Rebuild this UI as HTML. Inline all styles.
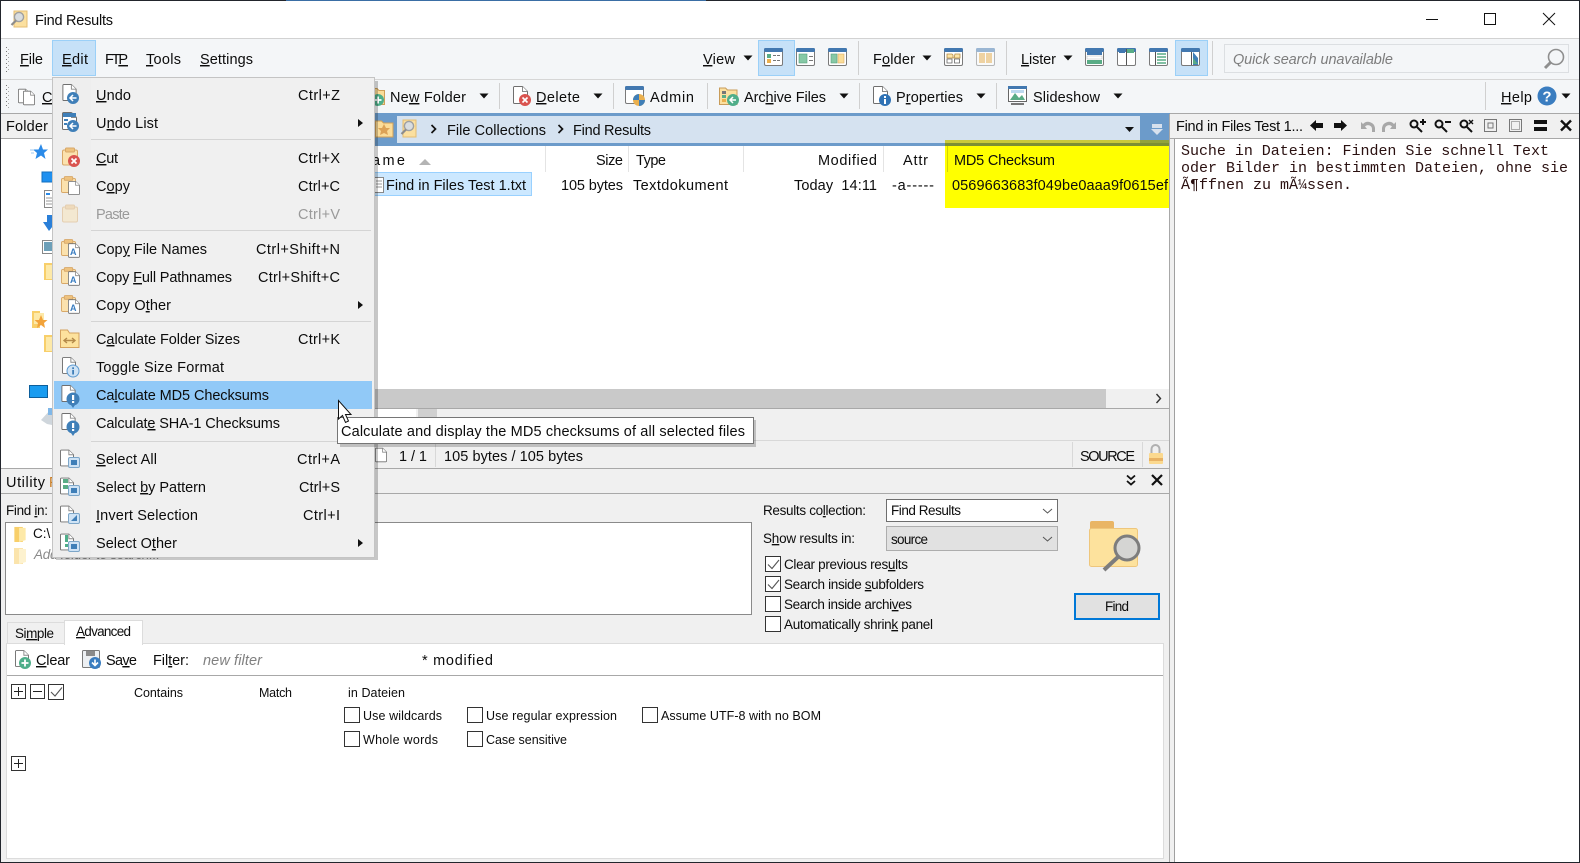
<!DOCTYPE html>
<html><head><meta charset="utf-8"><title>Find Results</title>
<style>
html,body{margin:0;padding:0;background:#fff;overflow:hidden}
svg{display:block;font-family:"Liberation Sans",sans-serif;font-size:14.5px;fill:#0c0c0c}
.g{fill:#9a9a9a}
</style></head><body>
<svg width="1580" height="863" viewBox="0 0 1580 863" xmlns="http://www.w3.org/2000/svg">
<defs>
<symbol id="pg" viewBox="0 0 15 18" overflow="visible"><path d="M.5 1.5a1 1 0 0 1 1-1H9.5L14.5 5.5V16.5a1 1 0 0 1-1 1H1.5a1 1 0 0 1-1-1Z" fill="#fff" stroke="#6f6f6f"/><path d="M9.5.5V5.5H14.5" fill="#fff" stroke="#8a8a8a"/></symbol>
<symbol id="clip" viewBox="0 0 16 18" overflow="visible"><rect x=".5" y="2.5" width="15" height="15" rx="1.5" fill="#fbe2ae" stroke="#d8a868"/><rect x="3.5" y=".5" width="9" height="4" rx="1" fill="#eec27e" stroke="#d8a868"/></symbol>
<symbol id="win" viewBox="0 0 19 18" overflow="visible"><rect x=".5" y=".5" width="18" height="17" rx="1.5" fill="#fff" stroke="#7a7a7a"/><rect x="0" y="0" width="19" height="4" rx="1.5" fill="#4278b0"/></symbol>
<symbol id="fold" viewBox="0 0 12 17" overflow="visible"><path d="M0 1H9V17H0Z" fill="#f8cf6a"/><path d="M5 2H12V15L5 17Z" fill="#fde9a8"/></symbol>
</defs>

<!-- window base -->
<rect width="1580" height="863" fill="#f0f0f0"/>
<rect width="1580" height="38" fill="#fff"/>
<rect y="39" width="1580" height="74" fill="#f4f6f8"/>
<rect y="38" width="1580" height="1" fill="#d2d2d2"/>
<rect y="79" width="1580" height="1" fill="#d6d6d6"/>
<rect y="113" width="1580" height="1" fill="#a8a8a8"/>

<!-- title bar -->
<g>
<path d="M14 11H27V27H14Z" fill="#fbe0a0" stroke="#e5bd72"/>
<circle cx="19" cy="17" r="4.6" fill="#d9dde0" stroke="#a0a0a0" stroke-width="1.4"/>
<path d="M16 20.500L11.500 25" stroke="#8c8c8c" stroke-width="2.200"/>
</g>
<text x="35" y="25" textLength="78">Find Results</text>
<path d="M1426 19.500H1438" stroke="#111"/>
<rect x="1484.500" y="13.500" width="11" height="11" fill="none" stroke="#111"/>
<path d="M1543 13L1555 25M1555 13L1543 25" stroke="#111"/>

<!-- grips -->
<path d="M6.500 47V72M6.500 85V108" stroke="#777" stroke-dasharray="1 3"/>
<path d="M8.500 49V72M8.500 87V108" stroke="#aaa" stroke-dasharray="1 3"/>

<!-- menu bar -->
<rect x="52.500" y="40.500" width="43" height="35" fill="#c6e1f8" stroke="#9bd0f8"/>
<text x="20" y="64" textLength="23"><tspan text-decoration="underline">F</tspan>ile</text>
<text x="62" y="64" textLength="26"><tspan text-decoration="underline">E</tspan>dit</text>
<text x="105" y="64" textLength="23">FT<tspan text-decoration="underline">P</tspan></text>
<text x="146" y="64" textLength="35"><tspan text-decoration="underline">T</tspan>ools</text>
<text x="200" y="64" textLength="53"><tspan text-decoration="underline">S</tspan>ettings</text>

<text x="703" y="64" textLength="32"><tspan text-decoration="underline">V</tspan>iew</text>
<path d="M743.500 55.500H752.500L748 60.500Z" fill="#111"/>
<rect x="758.500" y="40.500" width="36" height="35" fill="#c6e1f8" stroke="#9bd0f8"/>
<use href="#win" x="764" y="48" width="19" height="18"/>
<rect x="767" y="54" width="4" height="4" fill="#59ac86"/><rect x="767" y="59" width="4" height="4" fill="#eab04f"/><path d="M773 55.500h8M773 60.500h8" stroke="#777" stroke-dasharray="3 1"/>
<use href="#win" x="796" y="48" width="19" height="18"/>
<rect x="799" y="54" width="8" height="9" fill="#86c9a6" stroke="#59a07c" stroke-width=".6"/><path d="M809 56.500h4M809 60.500h4" stroke="#777"/>
<use href="#win" x="828" y="48" width="19" height="18"/>
<rect x="831" y="54" width="6" height="9" fill="#86c9a6" stroke="#59a07c" stroke-width=".6"/><rect x="838" y="54" width="6" height="9" fill="#fbdd98" stroke="#dfb066" stroke-width=".6"/>
<rect x="858" y="41" width="1" height="34" fill="#d0d0d0"/>

<text x="873" y="64" textLength="42">F<tspan text-decoration="underline">o</tspan>lder</text>
<path d="M922.500 55.500H931.500L927 60.500Z" fill="#111"/>
<use href="#win" x="944" y="48" width="19" height="18"/>
<path d="M947 54h5l1 1v3h-6ZM955 54h5v4h-6Z" fill="#fde5a8" stroke="#b58c46" stroke-width=".8"/>
<path d="M947 59h5v4h-5ZM954.500 59h5v4h-5Z" fill="#fff" stroke="#666" stroke-width=".8"/>
<g opacity=".5"><use href="#win" x="976" y="48" width="19" height="18"/><rect x="979" y="53" width="6" height="10" fill="#eab04f"/><rect x="986" y="53" width="6" height="10" fill="#eab04f"/></g>
<rect x="1006" y="41" width="1" height="34" fill="#d0d0d0"/>

<text x="1021" y="64" textLength="35"><tspan text-decoration="underline">L</tspan>ister</text>
<path d="M1063.500 55.500H1072.500L1068 60.500Z" fill="#111"/>
<use href="#win" x="1085" y="48" width="19" height="18"/>
<rect x="1087" y="52" width="15" height="3" fill="#4278b0"/><rect x="1087" y="56" width="15" height="3" fill="#fff" stroke="#aaa" stroke-width=".4"/><rect x="1087" y="60" width="15" height="4" fill="#59ac86"/>
<use href="#win" x="1117" y="48" width="19" height="18"/>
<rect x="1119" y="49" width="6" height="4" fill="#4278b0"/><rect x="1127" y="49" width="7" height="4" fill="#59ac86"/><path d="M1126.500 49V65" stroke="#555"/>
<use href="#win" x="1149" y="48" width="19" height="18"/>
<path d="M1155.500 52V65" stroke="#555"/><path d="M1157 54h9M1157 57h9M1157 60h9M1157 63h9" stroke="#59ac86" stroke-width="1.600"/>
<rect x="1175.500" y="40.500" width="32" height="35" fill="#c6e1f8" stroke="#9bd0f8"/>
<use href="#win" x="1181" y="48" width="19" height="18"/>
<path d="M1191.500 52V65" stroke="#555"/><path d="M1193 52L1198 58V65H1193Z" fill="#3f7fb8"/><path d="M1193 58L1198 64H1193Z" fill="#59ac86"/>
<rect x="1212" y="41" width="1" height="34" fill="#d0d0d0"/>
<rect x="1224.500" y="44.500" width="344" height="28" fill="#f4f6f8" stroke="#dcdfe2"/>
<text x="1233" y="64" textLength="160" font-style="italic" fill="#7d7d7d">Quick search unavailable</text>
<circle cx="1556" cy="57" r="7.500" fill="none" stroke="#8f8f8f" stroke-width="1.600"/>
<path d="M1550.500 62.500L1545 68" stroke="#8f8f8f" stroke-width="3"/>

<!-- toolbar 2 -->
<use href="#pg" x="18" y="88" width="12" height="16"/><use href="#pg" x="23" y="90" width="12" height="16"/>
<text x="42" y="102"><tspan text-decoration="underline">C</tspan></text>
<path d="M371 88.500h6l2 2h5.500v14h-13.500Z" fill="#fbdc98" stroke="#cf9f58"/>
<circle cx="378" cy="100" r="6" fill="#4fae8a"/><path d="M378 96.500v7m-3.500-3.500h7" stroke="#fff" stroke-width="1.800"/>
<text x="390" y="102" textLength="76">Ne<tspan text-decoration="underline">w</tspan> Folder</text>
<path d="M479.500 93.500H488.500L484 98.500Z" fill="#111"/>
<rect x="499" y="83" width="1" height="26" fill="#d0d0d0"/>
<use href="#pg" x="513" y="86" width="15" height="18"/>
<circle cx="525" cy="100" r="6" fill="#d9534f"/><path d="M522.500 97.500l5 5m0-5l-5 5" stroke="#fff" stroke-width="1.600"/>
<text x="536" y="102" textLength="44"><tspan text-decoration="underline">D</tspan>elete</text>
<path d="M593.500 93.500H602.500L598 98.500Z" fill="#111"/>
<rect x="613" y="83" width="1" height="26" fill="#d0d0d0"/>
<use href="#win" x="625" y="86" width="19" height="18"/>
<circle cx="639" cy="100" r="6" fill="#eab04f"/><path d="M639 94a6 6 0 0 0-6 6h6Zm0 6v6a6 6 0 0 0 6-6Z" fill="#3f7fb8"/>
<text x="650" y="102" textLength="44">Admin</text>
<rect x="707" y="83" width="1" height="26" fill="#d0d0d0"/>
<path d="M719.500 88h6l2 2h9.500v14.500h-17.500Z" fill="#fbe0a0" stroke="#c89c5a"/>
<rect x="722" y="91" width="4" height="3" fill="#777"/><rect x="722" y="95" width="4" height="3" fill="#59ac86"/><rect x="722" y="99" width="4" height="3" fill="#eab04f"/>
<circle cx="733" cy="100" r="6" fill="#4fae8a"/><path d="M736 100h-5m2-3l-3 3 3 3" stroke="#fff" stroke-width="1.500" fill="none"/>
<text x="744" y="102" textLength="82">Arc<tspan text-decoration="underline">h</tspan>ive Files</text>
<path d="M839.500 93.500H848.500L844 98.500Z" fill="#111"/>
<rect x="859" y="83" width="1" height="26" fill="#d0d0d0"/>
<use href="#pg" x="873" y="86" width="15" height="18"/>
<circle cx="885" cy="100" r="6" fill="#2f72b5"/><rect x="884" y="99" width="2" height="5" fill="#fff"/><rect x="884" y="96" width="2" height="2" fill="#fff"/>
<text x="896" y="102" textLength="67">P<tspan text-decoration="underline">r</tspan>operties</text>
<path d="M976.500 93.500H985.500L981 98.500Z" fill="#111"/>
<rect x="996" y="83" width="1" height="26" fill="#d0d0d0"/>
<rect x="1008.500" y="86.500" width="18" height="15" fill="#fff" stroke="#666"/><rect x="1008" y="86" width="19" height="3" fill="#4278b0"/>
<path d="M1010 100L1015 93L1019 98L1022 95L1025 100Z" fill="#59ac86"/><rect x="1011" y="90" width="13" height="3" fill="#bcd9ef"/>
<path d="M1011 104h13" stroke="#777" stroke-width="2"/>
<text x="1033" y="102" textLength="67">Slideshow</text>
<path d="M1113.500 93.500H1122.500L1118 98.500Z" fill="#111"/>
<rect x="1485" y="82" width="1" height="28" fill="#d0d0d0"/>
<text x="1501" y="102" textLength="31"><tspan text-decoration="underline">H</tspan>elp</text>
<circle cx="1547" cy="96" r="9.500" fill="#3a7dc0"/>
<text x="1547" y="101.500" text-anchor="middle" font-weight="bold" font-size="15" fill="#fff">?</text>
<path d="M1561.500 93.500H1570.500L1566 98.500Z" fill="#111"/>

<!-- folder pane header + tree -->
<rect x="1" y="114" width="369" height="24" fill="#f0f0f0"/>
<text x="6" y="131" textLength="42">Folder</text>
<rect x="1" y="138" width="369" height="1" fill="#a8a8a8"/>
<rect x="1" y="139" width="369" height="329" fill="#fff"/>
<path d="M41 144L43 149.500H48L44 153L45.500 159L41 155.500L35.500 159L37 153L33 149.500H38.500Z" fill="#2a8ae8"/>
<path d="M30 150h4M31 153h3" stroke="#9cc9f1"/>
<rect x="42" y="172" width="12" height="10" fill="#1e90f0" stroke="#136fbf"/>
<rect x="44.500" y="190.500" width="10" height="17" fill="#fff" stroke="#888"/><path d="M46 194h4" stroke="#2a8ae8" stroke-width="2"/><path d="M46 198h6M46 201h6M46 204h6" stroke="#999"/>
<path d="M47 215H52V222H56L49 231L43 222H47Z" fill="#2a7fd8"/>
<rect x="42.500" y="240.500" width="11" height="13" fill="#fff" stroke="#888"/><rect x="44" y="242" width="8" height="9" fill="#6c9fb8"/>
<path d="M44 263H52V280H44Z" fill="#f8cf6a"/><path d="M46 265H54V279H46Z" fill="#fde9a8"/>
<path d="M32 311H40V328H32Z" fill="#f8cf6a"/><path d="M34 313H44V324H34Z" fill="#fde9a8"/><path d="M41 315L43 320H47.500L44 323L45 328L41 325L37 328L38 323L34.500 320H39Z" fill="#f2a33a"/>
<path d="M44 335H52V352H44Z" fill="#f8cf6a"/><path d="M46 337H54V351H46Z" fill="#fde9a8"/>
<rect x="29.500" y="385.500" width="18" height="12" fill="#1a9cf0" stroke="#0d5f9c"/>
<path d="M41 420L52 408V425L47 424Z" fill="#cfd6dc"/><rect x="48" y="408" width="5" height="7" fill="#7fb7e8"/>

<!-- location bar -->
<rect x="370" y="113" width="800" height="33" fill="#6c9bca"/>
<rect x="397" y="116" width="743" height="27" fill="#d5e2f0"/>
<path d="M375.500 121h6l2 2h9.500v14h-17.500Z" fill="#fbdc98" stroke="#cf9f58"/>
<path d="M384 124L386 128H390L387 131L388 135L384 133L380 135L381 131L378 128H382Z" fill="#dca256"/>
<path d="M403 120H416V137H403Z" fill="#fbe0a0" stroke="#e5bd72"/>
<circle cx="409" cy="126" r="4.600" fill="#d9dde0" stroke="#a0a0a0" stroke-width="1.400"/>
<path d="M406 129.500L401.500 134" stroke="#8c8c8c" stroke-width="2.200"/>
<path d="M431.500 125L435.500 129L431.500 133" fill="none" stroke="#111" stroke-width="1.700"/>
<text x="447" y="135" textLength="99">File Collections</text>
<path d="M558.500 125L562.500 129L558.500 133" fill="none" stroke="#111" stroke-width="1.700"/>
<text x="573" y="135" textLength="78">Find Results</text>
<path d="M1125 127H1134L1129.500 132Z" fill="#111"/>
<rect x="1152" y="124" width="10" height="4" fill="#d7e1ed"/><path d="M1151 129H1163L1157 135Z" fill="#d7e1ed"/>

<!-- file list -->
<rect x="370" y="146" width="800" height="243" fill="#fff"/>
<path d="M545.500 146V172M628.500 146V172M743.500 146V172M883.500 146V172" stroke="#e4e4e4"/>
<text x="372" y="165" textLength="33">ame</text>
<path d="M419 165L425 159L431 165Z" fill="#b4b4b4"/>
<text x="596" y="165" textLength="27">Size</text>
<text x="636" y="165" textLength="30">Type</text>
<text x="818" y="165" textLength="59">Modified</text>
<text x="903" y="165" textLength="25">Attr</text>
<rect x="372.500" y="172.500" width="159" height="23" fill="#cce8ff" stroke="#99d1ff"/>
<rect x="374.500" y="177.500" width="9" height="15" fill="#fff" stroke="#888"/><path d="M376 181h6M376 184h6M376 187h6" stroke="#999"/>
<text x="386" y="190" textLength="140">Find in Files Test 1.txt</text>
<text x="561" y="190" textLength="62">105 bytes</text>
<text x="633" y="190" textLength="95">Textdokument</text>
<text x="794" y="190" textLength="83">Today&#160; 14:11</text>
<text x="892" y="190" textLength="42">-a-----</text>
<!-- yellow highlight -->
<rect x="945" y="146" width="224" height="62" fill="#ffff00"/>
<rect x="945" y="140" width="195" height="3" fill="#c9c93a"/>
<rect x="1140" y="140" width="29" height="3" fill="#92a23c"/>
<rect x="945" y="143" width="224" height="3" fill="#7c8f34"/>
<path d="M947.500 146V172" stroke="#d4d400"/>
<text x="954" y="165" textLength="101">MD5 Checksum</text>
<text x="952" y="190" textLength="216">0569663683f049be0aaa9f0615ef</text>

<!-- scrollbar & below -->
<rect x="370" y="389" width="736" height="19" fill="#c9c9c9"/>
<rect x="1106" y="389" width="63" height="19" fill="#f0f0f0"/>
<path d="M1156.500 394L1160.500 398.500L1156.500 403" fill="none" stroke="#333" stroke-width="1.400"/>
<rect x="370" y="408" width="800" height="1" fill="#a8a8a8"/>
<rect x="370" y="409" width="46" height="9" fill="#fff"/>
<rect x="418" y="409" width="19" height="9" fill="#d0d0d0"/>
<rect x="370" y="440" width="800" height="1" fill="#d8d8d8"/>
<use href="#pg" x="375" y="447" width="12" height="16"/>
<text x="399" y="461" textLength="28">1 / 1</text>
<rect x="435" y="442" width="1" height="25" fill="#d8d8d8"/>
<text x="444" y="461" textLength="139">105 bytes / 105 bytes</text>
<rect x="1072" y="442" width="1" height="25" fill="#d8d8d8"/>
<text x="1080" y="461" textLength="55">SOURCE</text>
<rect x="1142" y="442" width="1" height="25" fill="#d8d8d8"/>
<path d="M1151.500 455V449a4 4 0 0 1 8 0V455" fill="none" stroke="#b0b0b0" stroke-width="2"/>
<rect x="1149" y="453" width="14" height="11" rx="1" fill="#fbd98f"/><rect x="1149" y="458" width="14" height="3" fill="#e8b264"/>
<rect x="1" y="468" width="1169" height="1" fill="#a8a8a8"/>
<rect x="1169" y="114" width="1" height="354" fill="#a8a8a8"/>

<!-- lister -->
<rect x="1170" y="114" width="409" height="24" fill="#f0f0f0"/>
<rect x="1170" y="138" width="409" height="1" fill="#a8a8a8"/>
<rect x="1174" y="139" width="405" height="723" fill="#fff"/>
<rect x="1174" y="139" width="1" height="723" fill="#a0a0a0"/>
<text x="1176" y="131" textLength="127">Find in Files Test 1...</text>
<path d="M1310 125.500L1316 120V123H1323V128H1316V131Z" fill="#111"/>
<path d="M1347 125.500L1341 120V123H1334V128H1341V131Z" fill="#111"/>
<path d="M1361 122V129H1367L1365 126.500A4 4 0 0 1 1372 129L1372 132H1375V128A7 7 0 0 0 1363 124Z" fill="#a8a8a8"/>
<path d="M1396 122V129H1390L1392 126.500A4 4 0 0 0 1385 129L1385 132H1382V128A7 7 0 0 1 1394 124Z" fill="#a8a8a8"/>
<g fill="none" stroke="#111" stroke-width="2"><circle cx="1414" cy="124" r="3.500"/><path d="M1417 127L1422 132M1420 122h6M1423 119v6"/>
<circle cx="1439" cy="124" r="3.500"/><path d="M1442 127L1447 132M1445 122h6"/>
<circle cx="1464" cy="124" r="3.500"/><path d="M1467 127L1472 132"/></g>
<path d="M1469 120l4 4m0-4l-4 4" stroke="#111" stroke-width="1.400"/>
<rect x="1484.500" y="119.500" width="12" height="12" fill="none" stroke="#777"/><rect x="1488" y="123" width="5" height="5" fill="none" stroke="#777"/>
<rect x="1509.500" y="119.500" width="12" height="12" fill="none" stroke="#777"/><rect x="1511.500" y="121.500" width="8" height="8" fill="none" stroke="#aaa"/>
<rect x="1534" y="120" width="13" height="4" fill="#111"/><rect x="1534" y="127" width="13" height="4" fill="#111"/>
<path d="M1561 120.500L1571 130.500M1571 120.500L1561 130.500" stroke="#111" stroke-width="2.400"/>
<g font-family="'Liberation Mono',monospace" font-size="15" fill="#2a1010">
<text x="1181" y="155" textLength="368">Suche in Dateien: Finden Sie schnell Text</text>
<text x="1181" y="172" textLength="387">oder Bilder in bestimmten Dateien, ohne sie</text>
<text x="1181" y="189" textLength="171">Ã¶ffnen zu mÃ¼ssen.</text>
</g>

<!-- utility panel -->
<rect x="1" y="469" width="1168" height="393" fill="#f0f0f0"/>
<rect x="1" y="493" width="1168" height="1" fill="#a8a8a8"/>
<rect x="1169" y="469" width="1" height="393" fill="#a8a8a8"/>
<text x="6" y="487" textLength="39">Utility</text>
<text x="49" y="487" fill="#c87a20">P</text>
<path d="M1127 475.500L1131 479L1135 475.500M1127 481L1131 484.500L1135 481" fill="none" stroke="#111" stroke-width="1.800"/>
<path d="M1152 475L1162 485M1162 475L1152 485" stroke="#111" stroke-width="2.200"/>
<text x="6" y="515" font-size="13.500" textLength="42">Find <tspan text-decoration="underline">i</tspan>n:</text>
<rect x="5.500" y="522.500" width="746" height="92" fill="#fff" stroke="#8a8a8a"/>
<use href="#fold" x="14" y="526" width="12" height="16"/>
<text x="33" y="538" font-size="13.500">C:\</text>
<g opacity=".55"><use href="#fold" x="14" y="547" width="12" height="17"/></g>
<text x="34" y="559" font-size="13.500" font-style="italic" fill="#8a8a8a" textLength="126">Add folder to search...</text>

<g font-size="13.500">
<text x="763" y="515" textLength="103">Results co<tspan text-decoration="underline">l</tspan>lection:</text>
<text x="763" y="543" textLength="92">S<tspan text-decoration="underline">h</tspan>ow results in:</text>
<rect x="886.500" y="499.500" width="171" height="22" fill="#fff" stroke="#6e6e6e"/>
<text x="891" y="515" textLength="70">Find Results</text>
<path d="M1043 509L1047.500 513L1052 509" fill="none" stroke="#555"/>
<rect x="886.500" y="526.500" width="171" height="24" fill="#e1e1e1" stroke="#adadad"/>
<text x="891" y="544" textLength="37">source</text>
<path d="M1043 537L1047.500 541L1052 537" fill="none" stroke="#555"/>
<g fill="#fff" stroke="#333"><rect x="765.500" y="556.500" width="15" height="15"/><rect x="765.500" y="576.500" width="15" height="15"/><rect x="765.500" y="596.500" width="15" height="15"/><rect x="765.500" y="616.500" width="15" height="15"/></g>
<path d="M768 564.500L772 568.500L779 560M768 584.500L772 588.500L779 580" fill="none" stroke="#555" stroke-width="1.100"/>
<text x="784" y="569" textLength="124">Clear previous res<tspan text-decoration="underline">u</tspan>lts</text>
<text x="784" y="589" textLength="140">Search inside <tspan text-decoration="underline">s</tspan>ubfolders</text>
<text x="784" y="609" textLength="128">Search inside archi<tspan text-decoration="underline">v</tspan>es</text>
<text x="784" y="629" textLength="149">Automatically shrin<tspan text-decoration="underline">k</tspan> panel</text>
</g>
<!-- big folder -->
<path d="M1090 523a2 2 0 0 1 2-2H1112a2 2 0 0 1 2 2V529H1090Z" fill="#e9b565"/>
<rect x="1089.500" y="528.500" width="48" height="38" rx="2" fill="#fde29d" stroke="#eec67c"/>
<circle cx="1127" cy="548" r="12" fill="#d5d5d3" stroke="#7d7d7d" stroke-width="3"/>
<path d="M1118 557L1104 570" stroke="#7d7d7d" stroke-width="4"/>
<!-- find button -->
<rect x="1075" y="594" width="84" height="25" fill="#e1e1e1" stroke="#0078d7" stroke-width="2"/>
<text x="1105" y="611" textLength="24" font-size="13.500">Find</text>

<!-- tabs -->
<rect x="7.500" y="622.500" width="57" height="22" fill="#f0f0f0" stroke="#dcdcdc"/>
<text x="15" y="638" font-size="13.500" textLength="39">Si<tspan text-decoration="underline">m</tspan>ple</text>
<rect x="6.500" y="643.500" width="1157" height="215" fill="#fff" stroke="#dcdcdc"/>
<rect x="64.500" y="620.500" width="78" height="24" fill="#fff" stroke="#dcdcdc"/>
<rect x="65" y="642" width="77" height="3" fill="#fff"/>
<text x="76" y="636" font-size="13.500" textLength="55"><tspan text-decoration="underline">A</tspan>dvanced</text>
<!-- adv toolbar -->
<use href="#pg" x="15" y="650" width="14" height="17"/>
<circle cx="25" cy="663" r="6" fill="#4fae8a"/><path d="M25 659.500v7m-3.500-3.500h7" stroke="#fff" stroke-width="1.800"/>
<text x="36" y="665" textLength="34"><tspan text-decoration="underline">C</tspan>lear</text>
<rect x="82.500" y="650.500" width="17" height="17" rx="1" fill="#eceff2" stroke="#7a7a7a"/><rect x="86" y="651" width="9" height="5" fill="#8a8a8a"/>
<circle cx="95" cy="663" r="6" fill="#3a7dc0"/><path d="M95 659.500v6m-3-3l3 3 3-3" stroke="#fff" stroke-width="1.600" fill="none"/>
<text x="106" y="665" textLength="31">Sa<tspan text-decoration="underline">v</tspan>e</text>
<text x="153" y="665" textLength="36">Fil<tspan text-decoration="underline">t</tspan>er:</text>
<text x="203" y="665" textLength="59" font-style="italic" fill="#808080">new filter</text>
<text x="422" y="665" textLength="71">* modified</text>
<rect x="7" y="675" width="1156" height="1" fill="#a8a8a8"/>
<!-- rule row -->
<g fill="#fff" stroke="#333"><rect x="11.500" y="684.500" width="14" height="14"/><rect x="30.500" y="684.500" width="14" height="14"/><rect x="48.500" y="684.500" width="15" height="15"/><rect x="11.500" y="756.500" width="14" height="14"/></g>
<path d="M14 691.500h9M18.500 687v9M33 691.500h9M14 763.500h9M18.500 759v9" stroke="#222" fill="none"/>
<path d="M51 692L55 696L62 687.500" fill="none" stroke="#555" stroke-width="1.100"/>
<g font-size="12.500">
<text x="134" y="697" textLength="49">Contains</text>
<text x="259" y="697" textLength="33">Match</text>
<text x="348" y="697" textLength="57">in Dateien</text>
<g fill="#fff" stroke="#333"><rect x="344.500" y="707.500" width="15" height="15"/><rect x="467.500" y="707.500" width="15" height="15"/><rect x="642.500" y="707.500" width="15" height="15"/><rect x="344.500" y="731.500" width="15" height="15"/><rect x="467.500" y="731.500" width="15" height="15"/></g>
<text x="363" y="720" textLength="79">Use wildcards</text>
<text x="486" y="720" textLength="131">Use regular expression</text>
<text x="661" y="720" textLength="160">Assume UTF-8 with no BOM</text>
<text x="363" y="744" textLength="75">Whole words</text>
<text x="486" y="744" textLength="81">Case sensitive</text>
</g>

<!-- EDIT MENU -->
<rect x="56" y="81" width="322" height="479" fill="#000" opacity=".22"/>
<rect x="52.500" y="77.500" width="322" height="480" fill="#f0f0f0" stroke="#c4c4c4"/>
<rect x="53" y="78" width="38" height="479" fill="#eeeeee"/>
<path d="M91 139.500H371M91 230.500H371M91 321.500H371M91 441.500H371" stroke="#d4d4d4"/>
<rect x="54" y="381" width="318" height="28" fill="#91c9f7"/>
<!-- icons -->
<use href="#pg" x="62" y="84" width="15" height="17"/>
<circle cx="73" cy="98" r="6" fill="#3f7fb8"/><path d="M76.500 98h-6m2.500-3l-3 3 3 3" stroke="#fff" stroke-width="1.500" fill="none"/>
<use href="#pg" x="62" y="112" width="15" height="18"/><rect x="63" y="113" width="13" height="4" fill="#3f7fb8"/><path d="M64 120h4M64 124h3" stroke="#3f7fb8" stroke-width="2"/>
<circle cx="73" cy="126" r="6" fill="#3f7fb8"/><path d="M76.500 126h-6m2.500-3l-3 3 3 3" stroke="#fff" stroke-width="1.500" fill="none"/>
<use href="#clip" x="62" y="147" width="16" height="19"/>
<circle cx="74" cy="161" r="6" fill="#d9534f"/><path d="M71.500 158.500l5 5m0-5l-5 5" stroke="#fff" stroke-width="1.700"/>
<use href="#clip" x="61" y="175" width="15" height="19"/><use href="#pg" x="68" y="181" width="12" height="14"/>
<g opacity=".45"><use href="#clip" x="62" y="204" width="16" height="19"/></g>
<g>
<use href="#clip" x="61" y="238" width="15" height="19"/><use href="#pg" x="68" y="243" width="12" height="15"/><text x="70" y="255" font-size="9" font-weight="bold" fill="#3a7dc0">A</text>
<use href="#clip" x="61" y="266" width="15" height="19"/><use href="#pg" x="68" y="271" width="12" height="15"/><text x="70" y="283" font-size="9" font-weight="bold" fill="#3a7dc0">A</text>
<use href="#clip" x="61" y="294" width="15" height="19"/><use href="#pg" x="68" y="299" width="12" height="15"/><text x="70" y="311" font-size="9" font-weight="bold" fill="#3a7dc0">A</text>
</g>
<path d="M60.500 330h7l2 3h9.500v14.500h-18.500Z" fill="#fde29d" stroke="#d4a25e"/>
<path d="M64 340.500h11m-8-2.500l-3 2.500 3 2.500m5-5l3 2.500-3 2.500" stroke="#b48a4a" stroke-width="1.400" fill="none"/>
<use href="#pg" x="62" y="357" width="14" height="17"/>
<circle cx="73" cy="371" r="6" fill="#cfe3f5" stroke="#5d9ad0"/><rect x="72.200" y="370" width="1.800" height="4.500" fill="#3f7fb8"/><rect x="72.200" y="367.300" width="1.800" height="1.800" fill="#3f7fb8"/>
<use href="#pg" x="61" y="385" width="15" height="17"/>
<circle cx="73" cy="399" r="6.500" fill="#3f7fb8"/><path d="M71 405l2 3 2-3Z" fill="#3f7fb8"/><rect x="72" y="395" width="2.200" height="5" fill="#fff"/><rect x="72" y="401" width="2.200" height="2" fill="#fff"/>
<use href="#pg" x="61" y="413" width="15" height="17"/>
<circle cx="73" cy="427" r="6.500" fill="#3f7fb8"/><path d="M71 433l2 3 2-3Z" fill="#3f7fb8"/><rect x="72" y="423" width="2.200" height="5" fill="#fff"/><rect x="72" y="429" width="2.200" height="2" fill="#fff"/>
<use href="#pg" x="60" y="449" width="14" height="18"/><rect x="68.500" y="457.500" width="11" height="10" rx="1.500" fill="#cfe3f5" stroke="#7da6c8"/><rect x="71" y="460" width="6" height="5" fill="#3f7fb8"/>
<use href="#pg" x="60" y="477" width="14" height="18"/><rect x="63" y="479" width="5" height="4" fill="#59ac86"/><rect x="63" y="485" width="5" height="4" fill="#59ac86"/><rect x="68.500" y="485.500" width="11" height="10" rx="1.500" fill="#cfe3f5" stroke="#7da6c8"/><rect x="71" y="488" width="6" height="5" fill="#3f7fb8"/>
<use href="#pg" x="60" y="505" width="14" height="18"/><rect x="68.500" y="513.500" width="11" height="10" rx="1.500" fill="#cfe3f5" stroke="#7da6c8"/><path d="M71 521H77V515Z" fill="#3f7fb8"/>
<use href="#pg" x="60" y="533" width="14" height="18"/><rect x="65" y="535" width="3" height="7" fill="#4fae8a"/><rect x="65" y="544" width="3" height="3" fill="#4fae8a"/><rect x="68.500" y="541.500" width="11" height="10" rx="1.500" fill="#cfe3f5" stroke="#7da6c8"/><rect x="71" y="544" width="6" height="5" fill="#3f7fb8"/>
<!-- labels -->
<text x="96" y="100" textLength="35"><tspan text-decoration="underline">U</tspan>ndo</text>
<text x="96" y="128" textLength="62">U<tspan text-decoration="underline">n</tspan>do List</text>
<text x="96" y="163" textLength="22"><tspan text-decoration="underline">C</tspan>ut</text>
<text x="96" y="191" textLength="34">C<tspan text-decoration="underline">o</tspan>py</text>
<text x="96" y="219" textLength="34" class="g">Paste</text>
<text x="96" y="254" textLength="111">Cop<tspan text-decoration="underline">y</tspan> File Names</text>
<text x="96" y="282" textLength="136">Copy <tspan text-decoration="underline">F</tspan>ull Pathnames</text>
<text x="96" y="310" textLength="75">Copy O<tspan text-decoration="underline">t</tspan>her</text>
<text x="96" y="344" textLength="144">C<tspan text-decoration="underline">a</tspan>lculate Folder Sizes</text>
<text x="96" y="372" textLength="128">To<tspan text-decoration="underline">g</tspan>gle Size Format</text>
<text x="96" y="400" textLength="173">Ca<tspan text-decoration="underline">l</tspan>culate MD5 Checksums</text>
<text x="96" y="428" textLength="184">Calculat<tspan text-decoration="underline">e</tspan> SHA-1 Checksums</text>
<text x="96" y="464" textLength="61"><tspan text-decoration="underline">S</tspan>elect All</text>
<text x="96" y="492" textLength="110">Select <tspan text-decoration="underline">b</tspan>y Pattern</text>
<text x="96" y="520" textLength="102"><tspan text-decoration="underline">I</tspan>nvert Selection</text>
<text x="96" y="548" textLength="81">Select O<tspan text-decoration="underline">t</tspan>her</text>
<text x="298" y="100" textLength="42">Ctrl+Z</text>
<text x="298" y="163" textLength="42">Ctrl+X</text>
<text x="298" y="191" textLength="42">Ctrl+C</text>
<text x="298" y="219" textLength="42" class="g">Ctrl+V</text>
<text x="256" y="254" textLength="84">Ctrl+Shift+N</text>
<text x="258" y="282" textLength="82">Ctrl+Shift+C</text>
<text x="298" y="344" textLength="42">Ctrl+K</text>
<text x="297" y="464" textLength="43">Ctrl+A</text>
<text x="299" y="492" textLength="41">Ctrl+S</text>
<text x="303" y="520" textLength="37">Ctrl+I</text>
<path d="M358 119V127L363 123ZM358 301V309L363 305ZM358 539V547L363 543Z" fill="#111"/>

<!-- tooltip -->
<rect x="340" y="420" width="416" height="27" fill="#000" opacity=".2"/>
<rect x="337.500" y="417.500" width="416" height="26" fill="#fff" stroke="#767676"/>
<text x="341" y="436" textLength="404">Calculate and display the MD5 checksums of all selected files</text>

<!-- cursor -->
<path d="M338.500 400.500V419L342.500 415.500L345.500 422.500L348.500 421L345.500 414.500H351Z" fill="#fff" stroke="#111" stroke-width="1"/>

<!-- window frame -->
<rect width="286" height="1" fill="#22252c"/><rect x="286" width="420" height="1" fill="#3a6ea5"/><rect x="706" width="874" height="1" fill="#22252c"/>
<rect width="1" height="863" fill="#22252c"/>
<rect x="1579" width="1" height="863" fill="#22252c"/>
<rect y="862" width="1580" height="1" fill="#22252c"/>
</svg>
</body></html>
